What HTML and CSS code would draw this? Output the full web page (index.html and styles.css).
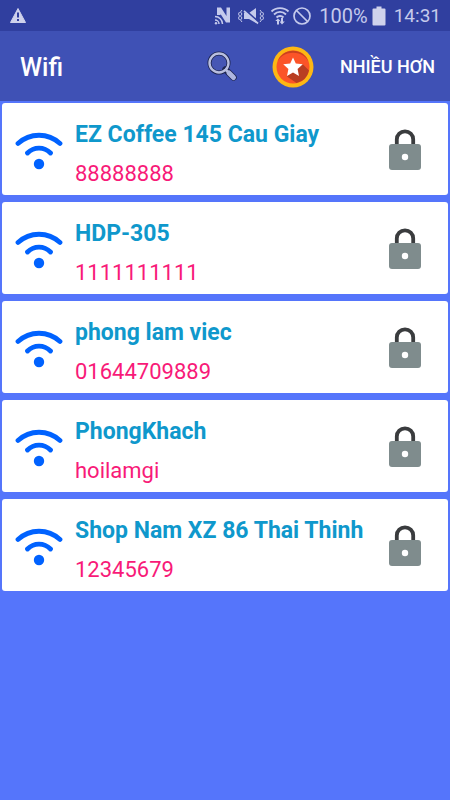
FILE: index.html
```html
<!DOCTYPE html>
<html lang="vi">
<head>
<meta charset="utf-8">
<meta name="viewport" content="width=device-width, initial-scale=1">
<title>Wifi</title>
<link rel="stylesheet" href="styles.css">
</head>
<body>
<svg class="defs" aria-hidden="true">
  <symbol id="wifi" viewBox="0 0 48 40">
    <path d="M3 13.500C15 2.500 33 2.500 45 13.500M12.500 23C19 16.500 29 16.500 35.500 23" fill="none" stroke="#0062ff" stroke-width="4.800" stroke-linecap="round"/>
    <circle cx="24" cy="34" r="5.200" fill="#0062ff"/>
  </symbol>
  <symbol id="lock" viewBox="0 0 34 42">
    <path d="M8.800 17V10.500a8.200 8.200 0 0 1 16.400 0V17" fill="none" stroke="#3a3c3e" stroke-width="3.800"/>
    <rect x="1" y="15" width="32" height="26" rx="3" fill="#7f8c8d"/>
    <circle cx="17" cy="28" r="3.200" fill="#fff"/>
  </symbol>
</svg>
<div class="status">
  <svg class="warn" width="18" height="18" viewBox="0 0 18 18"><path d="M9 1.500L16.500 15.500H1.500Z" fill="#cfd2ec" stroke="#cfd2ec" stroke-linejoin="round"/><path d="M9 5.500V10.500M9 12V14" stroke="#303f9f" stroke-width="2"/></svg>
  <div class="tray">
    <svg width="18" height="20" viewBox="0 0 18 20"><path d="M3 9V1.500H7L12.500 10V1.500H16V16.500H12L6.500 8V9Z" fill="#c5caec"/><g fill="none" stroke="#c5caec" stroke-width="1.500"><path d="M1 10.500A7.500 7.500 0 0 1 8.500 18M1 14A4 4 0 0 1 5 18"/></g><circle cx="2" cy="17.200" r="1.200" fill="#c5caec"/></svg>
    <svg class="mute" width="26" height="20" viewBox="0 0 26 20"><path d="M6 7H11L18 2V17L11 13H6Z" fill="#c5caec"/><path d="M6.500 3.500L20 15.500" stroke="#303f9f" stroke-width="2"/><path d="M6 5L20 17.500" stroke="#c5caec" stroke-width="1.700"/><path d="M4 4L2.500 6L4 8L2.500 10L4 12L2.500 14L4 16M1.500 6L.5 8L1.500 10L.5 12L1.500 14M22 4L23.500 6L22 8L23.500 10L22 12L23.500 14L22 16M24.500 6L25.500 8L24.500 10L25.500 12L24.500 14" fill="none" stroke="#c5caec" stroke-width="1"/></svg>
    <svg class="net" width="20" height="20" viewBox="0 0 20 20"><g fill="none" stroke="#c5caec" stroke-width="1.900"><path d="M1.500 5.500C6 1 14 1 18.500 5.500M4 8.500C7.500 5 12.500 5 16 8.500M6.500 11.500C8.500 9.500 11.500 9.500 13.500 11.500"/></g><path d="M8 12.500L5.200 15H7V18.500H9V15H10.500ZM11 12V15.500H9.500L12 18.500L14.800 15.500H13V12Z" fill="#c5caec"/></svg>
    <svg width="20" height="20" viewBox="0 0 20 20"><g fill="none" stroke="#c5caec" stroke-width="1.700"><circle cx="10" cy="10" r="8"/><path d="M4.500 4.500L15.500 15.500"/></g></svg>
    <span class="percent">100%</span>
    <svg class="battery" width="14" height="20" viewBox="0 0 14 20"><path d="M4.500 .5H9.500V2.500H12.500Q13.500 2.500 13.500 3.500V18.500Q13.500 19.500 12.500 19.500H1.500Q.5 19.500 .5 18.500V3.500Q.5 2.500 1.500 2.500H4.500Z" fill="#cfd2ec"/></svg>
    <span>14:31</span>
  </div>
</div>
<header class="bar">
  <h1>Wifi</h1>
  <button type="button" aria-label="Tìm kiếm"><svg width="32" height="32" viewBox="0 0 32 32"><circle cx="12" cy="12" r="9.500" fill="#4656b4" stroke="#1d2550" stroke-width="4"/><path d="M18.500 18.500L26.500 26.500" stroke="#1d2550" stroke-width="6.500" stroke-linecap="round"/><circle cx="12" cy="12" r="9.500" fill="none" stroke="#b9bfe0" stroke-width="2.400"/><path d="M18 18L21 21" stroke="#b9bfe0" stroke-width="2.500"/><path d="M22 22L26.500 26.500" stroke="#aeb6df" stroke-width="5" stroke-linecap="round"/></svg></button>
  <button class="star" type="button" aria-label="Nổi bật"><svg width="42" height="42" viewBox="0 0 42 42"><circle cx="21" cy="21" r="20.500" fill="#fdb714"/><circle cx="21" cy="21" r="16.500" fill="#fb5428"/><path d="M30.500 18L37 24.500A16.500 16.500 0 0 1 24.500 37L15 30.500L21 21Z" fill="#b93e22"/><path d="M4.800 18A16.500 16.500 0 0 1 37.200 18A16.500 14 0 0 0 4.800 18Z" fill="#c9411f"/><path d="M21 11.500L23.800 17.500L30.800 18.300L25.600 23L27 30L21 26.600L15 30L16.400 23L11.200 18.300L18.200 17.500Z" fill="#fff"/></svg></button>
  <button class="more" type="button">NHIỀU HƠN</button>
</header>
<ul class="list">
  <li class="card"><svg class="wifi"><use href="#wifi"/></svg><div class="info"><h2>EZ Coffee 145 Cau Giay</h2><p>88888888</p></div><svg class="lock"><use href="#lock"/></svg></li>
  <li class="card"><svg class="wifi"><use href="#wifi"/></svg><div class="info"><h2>HDP-305</h2><p>1111111111</p></div><svg class="lock"><use href="#lock"/></svg></li>
  <li class="card"><svg class="wifi"><use href="#wifi"/></svg><div class="info"><h2>phong lam viec</h2><p>01644709889</p></div><svg class="lock"><use href="#lock"/></svg></li>
  <li class="card"><svg class="wifi"><use href="#wifi"/></svg><div class="info"><h2>PhongKhach</h2><p>hoilamgi</p></div><svg class="lock"><use href="#lock"/></svg></li>
  <li class="card"><svg class="wifi"><use href="#wifi"/></svg><div class="info"><h2>Shop Nam XZ 86 Thai Thinh</h2><p>12345679</p></div><svg class="lock"><use href="#lock"/></svg></li>
</ul>
</body>
</html>
```
FILE: styles.css
```css
* { box-sizing: border-box; }
body { margin: 0; min-height: 100vh; background: #5575fb; font-family: Roboto, "Liberation Sans", sans-serif; }
svg { display: block; flex: none; }
.defs { position: absolute; width: 0; height: 0; }
.status { display: flex; align-items: center; justify-content: space-between; height: 31px; padding: 0 9px; background: #303f9f; color: #c5caec; font-size: 19px; }
.tray { display: flex; align-items: center; }
.mute { margin-left: 6px; }
.net { margin: 0 2px 0 6px; }
.percent { margin-left: 7px; font-size: 20px; }
.battery { margin: 0 8px 0 4px; }
.bar { display: flex; align-items: center; height: 70px; padding: 2px 15px 0 20px; background: #3f51b5; color: #fff; }
h1 { flex: 1; margin: 0; padding-top: 2px; font-size: 25px; font-weight: 500; line-height: 30px; }
button { padding: 0; border: 0; background: none; color: inherit; font: inherit; }
.star { margin: 0 26px 0 33px; }
.more { font-size: 18px; font-weight: 500; line-height: 24px; }
.list { display: flex; flex-direction: column; gap: 7px; margin: 0; padding: 2px; list-style: none; }
.card { display: flex; align-items: center; height: 92px; padding: 2px 26px 0 13px; border-radius: 3px; background: #fff; }
.wifi { width: 48px; height: 40px; }
.lock { width: 34px; height: 42px; }
.info { flex: 1; padding: 8px 0 0 12px; }
h2, p { margin: 0; font-size: 23px; line-height: 39px; }
h2 { color: #0f98cc; font-weight: 700; }
p { color: #f81a78; font-size: 22px; font-weight: 400; }
```
